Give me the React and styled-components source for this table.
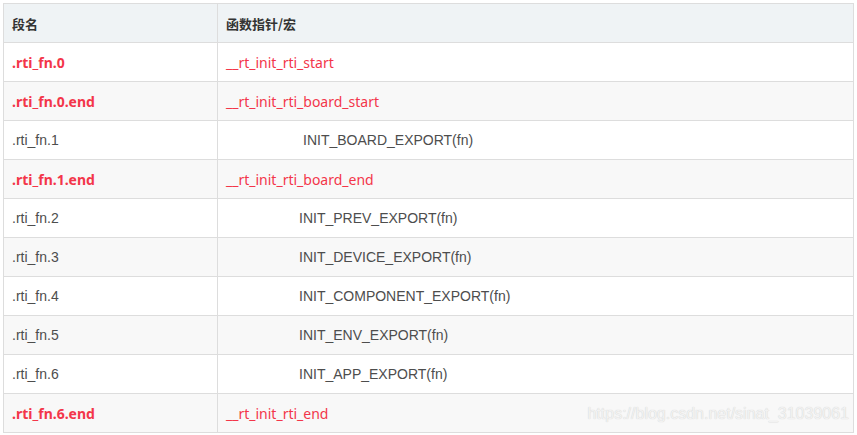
import React from "react";
import styled, { createGlobalStyle } from "styled-components";

const Global = createGlobalStyle`
  body {
    margin: 0;
    background: #fff;
    font-family: "Liberation Sans", "Noto Sans CJK SC", sans-serif;
  }
`;

const Wrap = styled.div`
  position: relative;
  padding: 3px 3px 0 3px;
`;

const Table = styled.table`
  width: 851px;
  border-collapse: collapse;
  font-size: 14px;
  color: #4d4d4d;
`;

const Th = styled.th`
  height: 38px;
  padding: 0 8px;
  text-align: left;
  font-weight: bold;
  font-size: 13px;
  color: #333;
  background: #eff3f5;
  border: 1px solid #dddddd;
  font-family: "Noto Sans CJK SC", sans-serif;
  width: ${(p) => p.$w || "auto"};
`;

const Row = styled.tr`
  background: ${(p) => (p.$odd ? "#f8f8f8" : "#ffffff")};
`;

const Td = styled.td`
  height: 38px;
  padding: 0 8px;
  border: 1px solid #dddddd;
  white-space: pre;
  padding-left: ${(p) => 8 + (p.$indent || 0)}px;
`;

const Red = styled.span`
  color: #f3364a;
  font-weight: ${(p) => (p.$bold ? "bold" : "normal")};
  font-family: "Noto Sans", "Liberation Sans", sans-serif;
`;

const Mark = styled.div`
  position: absolute;
  right: 8px;
  bottom: 10px;
  font-size: 16px;
  color: #f2f2f2;
  text-shadow: 0 0 1px #c8c8c8;
  pointer-events: none;
  font-family: "Liberation Sans", sans-serif;
`;

const rows = [
  { sec: ".rti_fn.0", fn: "__rt_init_rti_start", red: true },
  { sec: ".rti_fn.0.end", fn: "__rt_init_rti_board_start", red: true },
  { sec: ".rti_fn.1", fn: "INIT_BOARD_EXPORT(fn)", indent: 77 },
  { sec: ".rti_fn.1.end", fn: "__rt_init_rti_board_end", red: true },
  { sec: ".rti_fn.2", fn: "INIT_PREV_EXPORT(fn)", indent: 73 },
  { sec: ".rti_fn.3", fn: "INIT_DEVICE_EXPORT(fn)", indent: 73 },
  { sec: ".rti_fn.4", fn: "INIT_COMPONENT_EXPORT(fn)", indent: 73 },
  { sec: ".rti_fn.5", fn: "INIT_ENV_EXPORT(fn)", indent: 73 },
  { sec: ".rti_fn.6", fn: "INIT_APP_EXPORT(fn)", indent: 73 },
  { sec: ".rti_fn.6.end", fn: "__rt_init_rti_end", red: true },
];

export default function App() {
  return (
    <Wrap>
      <Global />
      <Table>
        <thead>
          <tr>
            <Th $w="197px">段名</Th>
            <Th>函数指针/宏</Th>
          </tr>
        </thead>
        <tbody>
          {rows.map((r, i) => (
            <Row key={r.sec} $odd={i % 2 === 1}>
              <Td>{r.red ? <Red $bold>{r.sec}</Red> : r.sec}</Td>
              <Td $indent={r.indent}>{r.red ? <Red>{r.fn}</Red> : r.fn}</Td>
            </Row>
          ))}
        </tbody>
      </Table>
      <Mark>https://blog.csdn.net/sinat_31039061</Mark>
    </Wrap>
  );
}
